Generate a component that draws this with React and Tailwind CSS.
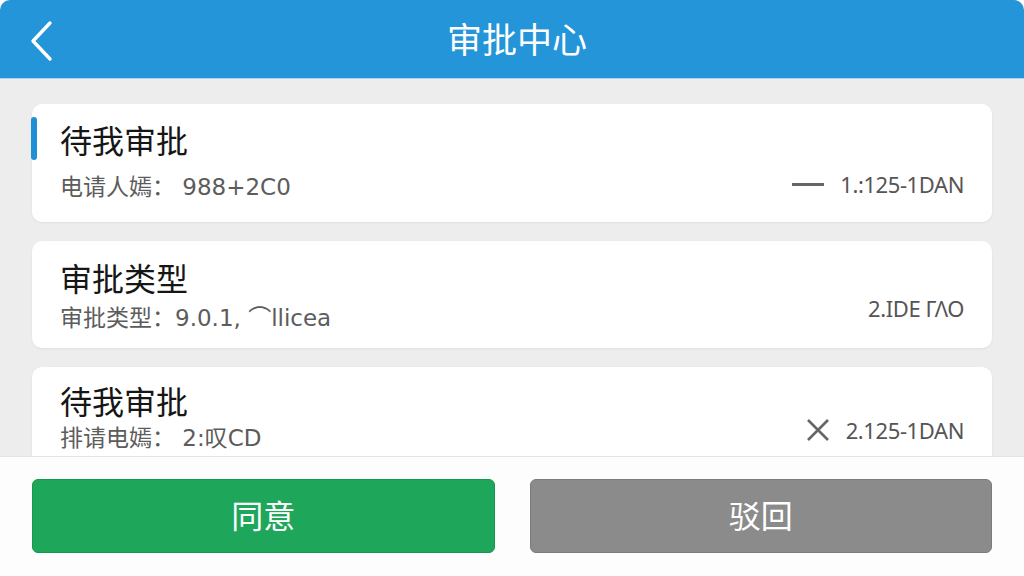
const cjk = { fontFamily: '"Noto Sans", "Noto Sans CJK SC", sans-serif' }
const subFont = { fontFamily: '"DejaVu Sans", "Noto Sans CJK SC", sans-serif' }

function Card({ title, sub, right, icon, accent, pad }) {
  return (
    <div className={`relative rounded-[10px] bg-white px-[28px] shadow-[0_1px_3px_rgba(0,0,0,0.06)] ${pad.card}`}>
      {accent && <div className="absolute left-[-1px] top-[13px] h-[43px] w-[6px] rounded-full bg-[#1f8fd6]" />}
      <div className="text-[32px] leading-[36px] text-[#161616]">{title}</div>
      <div className={`flex h-[30px] items-center justify-between ${pad.sub}`}>
        <div className="text-[23px] leading-[30px] text-[#5c5c5c]" style={subFont}>{sub}</div>
        <div className={`flex items-center gap-[16px] ${pad.right}`}>
          {icon}
          <span className="text-[22px] leading-[26px] tracking-[-0.4px] text-[#555]">{right}</span>
        </div>
      </div>
    </div>
  )
}

export default function App() {
  return (
    <div className="flex h-[576px] w-[1024px] flex-col overflow-hidden bg-white" style={cjk}>
      {/* header */}
      <div className="relative flex h-[79px] shrink-0 items-center justify-center rounded-t-[10px] border-b border-[#a8d3ef] bg-[#2395d8]">
        <svg className="absolute left-[26px] top-[20px]" width="32" height="42" viewBox="0 0 32 42">
          <path d="M24 3 L7 21 L24 39" stroke="white" strokeWidth="3.4" fill="none" strokeLinecap="round" strokeLinejoin="round" />
        </svg>
        <h1 className="pl-[10px] text-[35px] leading-none text-white">审批中心</h1>
      </div>

      {/* list */}
      <div className="flex flex-1 flex-col gap-[19px] overflow-hidden bg-[#ededed] px-[32px] pt-[25px]">
        <Card
          accent
          title="待我审批"
          sub="电请人嫣： 988+2C0"
          right="1.:125-1DAN"
          icon={<div className="h-[3px] w-[32px] bg-[#666]" />}
          pad={{ card: "pt-[19px] pb-[20px]", sub: "mt-[13px]", right: "mb-[6px]" }}
        />
        <Card
          title="审批类型"
          sub="审批类型：9.0.1,  ⌒llicea"
          right="2.IDΕ ΓΛΟ"
          pad={{ card: "pt-[20px] pb-[15px]", sub: "mt-[6px]", right: "mb-[20px]" }}
        />
        <Card
          title="待我审批"
          sub="排请电嫣： 2:叹CD"
          right="2.125-1DAN"
          icon={
            <svg width="24" height="24" viewBox="0 0 24 24" className="text-[#666]">
              <path d="M2 2 L22 22 M22 2 L2 22" stroke="currentColor" strokeWidth="2.6" fill="none" />
            </svg>
          }
          pad={{ card: "pt-[17px] pb-[20px]", sub: "mt-[3px]", right: "mb-[16px]" }}
        />
      </div>

      {/* actions */}
      <div className="flex h-[120px] shrink-0 gap-[35px] border-t border-[#e4e4e4] bg-[#fdfdfd] px-[32px] pt-[22px]">
        <button className="flex h-[74px] flex-1 items-center justify-center rounded-[6px] border border-[#16974f] bg-[#1ea65a] text-[32px] text-white">
          同意
        </button>
        <button className="flex h-[74px] flex-1 items-center justify-center rounded-[6px] border border-[#7c7c7c] bg-[#8b8b8b] text-[32px] text-white">
          驳回
        </button>
      </div>
    </div>
  )
}
